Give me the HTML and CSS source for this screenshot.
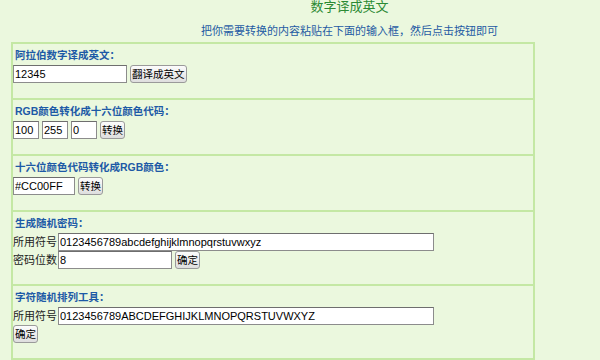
FILE: index.html
```html
<!DOCTYPE html>
<html lang="zh-CN">
<head>
    <meta charset="UTF-8">
    <meta name="viewport" content="width=device-width, initial-scale=1.0">
    <title>数字译成英文</title>
    <link rel="stylesheet" href="styles.css">
</head>
<body>

    <div class="header">
        <h1>数字译成英文</h1>
        <p>把你需要转换的内容粘贴在下面的输入框，然后点击按钮即可</p>
    </div>

    <div class="tools">
        <div class="tool">
            <h3>阿拉伯数字译成英文：</h3>
            <div class="row">
                <input type="text" class="num-input" value="12345">
                <button>翻译成英文</button>
            </div>
        </div>

        <div class="tool">
            <h3>RGB颜色转化成十六位颜色代码：</h3>
            <div class="row">
                <input type="text" class="rgb-input" value="100">
                <input type="text" class="rgb-input" value="255">
                <input type="text" class="rgb-input" value="0">
                <button>转换</button>
            </div>
        </div>

        <div class="tool">
            <h3>十六位颜色代码转化成RGB颜色：</h3>
            <div class="row">
                <input type="text" class="hex-input" value="#CC00FF">
                <button>转换</button>
            </div>
        </div>

        <div class="tool">
            <h3>生成随机密码：</h3>
            <div class="row">
                <span class="field-name">所用符号</span>
                <input type="text" class="chars-input" value="0123456789abcdefghijklmnopqrstuvwxyz">
            </div>
            <div class="row">
                <span class="field-name">密码位数</span>
                <input type="text" class="num-input" value="8">
                <button>确定</button>
            </div>
        </div>

        <div class="tool">
            <h3>字符随机排列工具：</h3>
            <div class="row">
                <span class="field-name">所用符号</span>
                <input type="text" class="chars-input" value="0123456789ABCDEFGHIJKLMNOPQRSTUVWXYZ">
            </div>
            <div class="row">
                <button>确定</button>
            </div>
        </div>
    </div>

</body>
</html>
```

FILE: styles.css
```css
*
{
    padding: 0;
    margin: 0;
    box-sizing: border-box;
}

body
{
    background-color: #ebf8de;
    font-family: "Liberation Sans", "Noto Sans CJK SC", sans-serif;
    overflow: hidden;
}

.header
{
    padding-left: 99px;
    text-align: center;
}

.header h1
{
    font-size: 13px;
    line-height: 13px;
    font-weight: normal;
    color: #2b8a34;
}

.header p
{
    margin-top: 11px;
    font-size: 11px;
    line-height: 14px;
    color: #1f5ba3;
}

.tools
{
    width: 524px;
    margin: 4px 0 0 11px;
    border: 2px solid #c4e8a4;
}

.tool
{
    padding: 4px 0 15px 0;
}

.tool + .tool
{
    border-top: 2px solid #c4e8a4;
}

.tool h3
{
    padding-left: 2px;
    margin-bottom: 3px;
    font-size: 10.5px;
    line-height: 14px;
    color: #1d5aa6;
}

.row
{
    display: flex;
    align-items: center;
    gap: 3px;
    height: 18px;
}

.field-name
{
    font-size: 11px;
    line-height: 18px;
    color: #222;
    margin-right: -2px;
}

.row input
{
    height: 18px;
    padding: 0 1px;
    border: 1px solid #8c8c8c;
    border-top-color: #6e6e6e;
    background: #fff;
    font-family: "Liberation Sans", sans-serif;
    font-size: 11px;
    color: #000;
    outline: none;
}

.num-input
{
    width: 114px;
}

.rgb-input
{
    width: 26px;
}

.hex-input
{
    width: 62px;
}

.chars-input
{
    width: 376px;
}

.row button
{
    height: 18px;
    padding: 0 1px;
    border: 1px solid #9a9a9a;
    border-radius: 3px;
    background: linear-gradient(#fcfcfc, #dedede);
    font-family: "Noto Sans CJK SC", sans-serif;
    font-size: 10.5px;
    line-height: 16px;
    color: #000;
    cursor: pointer;
}
```
